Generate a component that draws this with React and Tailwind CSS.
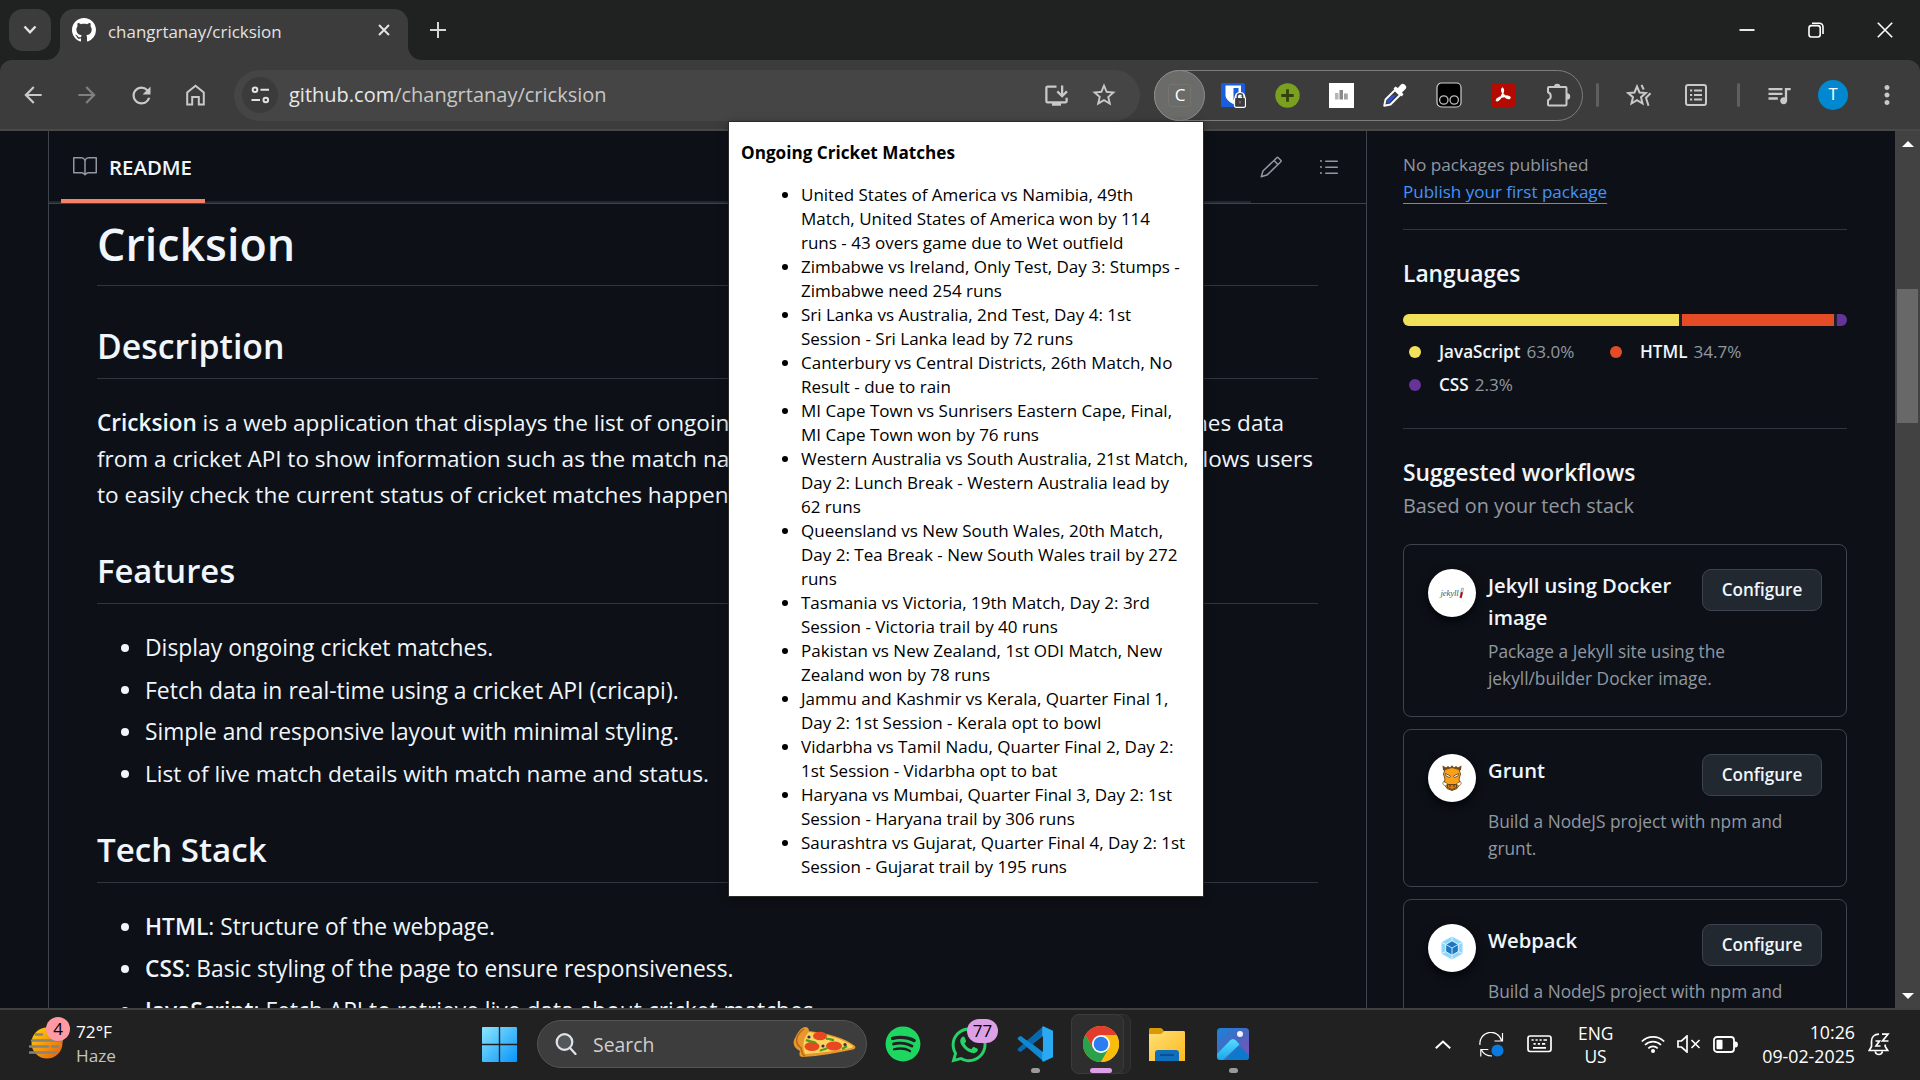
import React from "react";
import {
  MdArrowBack,
  MdArrowForward,
  MdRefresh,
  MdStarBorder,
  MdOutlineInstallDesktop,
  MdQueueMusic,
  MdMoreVert,
} from "react-icons/md";
import { GoBook, GoPencil, GoListUnordered } from "react-icons/go";
import { FaSpotify, FaWhatsapp } from "react-icons/fa";

/* ---------- tab strip and toolbar ---------- */

function GithubMark() {
  return (
    <svg viewBox="0 0 16 16" className="size-6 shrink-0" fill="#fff">
      <path d="M8 0C3.58 0 0 3.58 0 8c0 3.54 2.29 6.53 5.47 7.59.4.07.55-.17.55-.38 0-.19-.01-.82-.01-1.49-2.01.37-2.53-.49-2.69-.94-.09-.23-.48-.94-.82-1.13-.28-.15-.68-.52-.01-.53.63-.01 1.08.58 1.23.82.72 1.21 1.87.87 2.33.66.07-.52.28-.87.51-1.07-1.78-.2-3.64-.89-3.64-3.95 0-.87.31-1.59.82-2.15-.08-.2-.36-1.02.08-2.12 0 0 .67-.21 2.2.82.64-.18 1.32-.27 2-.27s1.36.09 2 .27c1.53-1.04 2.2-.82 2.2-.82.44 1.1.16 1.92.08 2.12.51.56.82 1.27.82 2.15 0 3.07-1.87 3.75-3.65 3.95.29.25.54.73.54 1.48 0 1.07-.01 1.93-.01 2.2 0 .21.15.46.55.38A8.01 8.01 0 0 0 16 8c0-4.42-3.58-8-8-8Z" />
    </svg>
  );
}

function TabStrip() {
  return (
    <div className="flex h-[60px] bg-[#202221]">
      <button className="mt-[9px] ml-[9px] flex h-[42px] w-[42px] items-center justify-center rounded-[14px] bg-[#3c3c3c]">
        <svg viewBox="0 0 14 10" className="h-[10px] w-[14px]" fill="none" stroke="#e3e3e3" strokeWidth="2.4">
          <path d="M1.5 1.5 7 7.3l5.500-5.800" />
        </svg>
      </button>
      <div className="mt-[9px] flex h-[51px] items-stretch">
        <svg viewBox="0 0 14 14" className="-ml-[5px] size-[14px] self-end" fill="#3c3c3c">
          <path d="M14 0v14H0A14 14 0 0 0 14 0Z" />
        </svg>
        <div className="flex w-[348px] items-center rounded-t-[14px] bg-[#3c3c3c] pb-[9px] pl-3">
          <GithubMark />
          <span className="ml-3 pt-[3px] text-[16.95px] leading-6 text-[#e3e3e3]">changrtanay/cricksion</span>
          <svg viewBox="0 0 12 12" className="ml-auto mr-[18px] size-3" stroke="#e3e3e3" strokeWidth="2">
            <path d="m1 1 10 10M11 1 1 11" />
          </svg>
        </div>
        <svg viewBox="0 0 14 14" className="size-[14px] self-end" fill="#3c3c3c">
          <path d="M0 0v14h14A14 14 0 0 1 0 0Z" />
        </svg>
      </div>
      <svg viewBox="0 0 16 16" className="mt-[22px] ml-2 size-4" stroke="#d6d6d6" strokeWidth="2">
        <path d="M8 0v16M0 8h16" />
      </svg>
      <div className="ml-auto flex h-[60px] items-center text-white">
        <svg viewBox="0 0 16 16" className="mr-[53px] size-4" stroke="#fff" strokeWidth="1.800">
          <path d="M.5 8h15" />
        </svg>
        <svg viewBox="0 0 16 16" className="mr-[53px] size-4" fill="none" stroke="#fff" strokeWidth="1.600">
          <rect x="1" y="3.600" width="11.200" height="11.400" rx="2.400" />
          <path d="M4 1.200h7.500a3.500 3.500 0 0 1 3.500 3.500V12" />
        </svg>
        <svg viewBox="0 0 16 16" className="mr-[27px] size-4" stroke="#fff" strokeWidth="1.600">
          <path d="m.8.8 14.400 14.400M15.200.8.8 15.200" />
        </svg>
      </div>
    </div>
  );
}

function Bitwarden() {
  return (
    <svg viewBox="0 0 25 25" className="size-[25px]">
      <rect width="24" height="24" rx="1.500" fill="#175ddc" />
      <path d="M4.500 2.500h15.500V12c0 5-4 8-6.500 9.500C8.500 19.500 4.500 16 4.500 12Z" fill="#fff" />
      <path d="M12.500 5h5v7c0 2-2.500 3.500-5 5Z" fill="#175ddc" />
      <path d="M15.500 15v-1.500a3.600 3.600 0 0 1 7 0V15" fill="none" stroke="#fff" strokeWidth="3.600" />
      <rect x="13.500" y="14.500" width="11" height="9.800" rx="1.500" fill="#3c3c3c" stroke="#fff" strokeWidth="1.200" />
      <path d="M16.300 15v-1.500a2.700 2.700 0 0 1 5.400 0V15" fill="none" stroke="#4a4a4a" strokeWidth="1.500" />
      <path d="M19 18v2.500" stroke="#777" strokeWidth="1.400" />
    </svg>
  );
}

function Dropper() {
  return (
    <svg viewBox="0 0 24 24" className="size-6">
      <path d="M12 7 2.500 16.500 1.200 22.800 7.500 21.500 17 12Z" fill="#3c3c3c" stroke="#fff" strokeWidth="1.900" strokeLinejoin="round" />
      <path d="m8.500 12.500 4.500-.5-6.200 7.500-3.300.7.700-3.300Z" fill="#2f4fd0" />
      <path d="m10.500 5.500 2-2 2.300 1.500L18 1.500c1-1 2.500-1 3.500 0l1 1c1 1 1 2.500 0 3.500L19 9.500l1.500 2-2 2Z" fill="#fff" />
    </svg>
  );
}

function Tampermonkey() {
  return (
    <svg viewBox="0 0 26 26" className="size-[26px]">
      <rect x="1" y="1" width="24" height="24" rx="4.500" fill="#000" stroke="#cfcfcf" strokeWidth="1.200" />
      <circle cx="7.800" cy="18" r="4.200" fill="none" stroke="#bdbdbd" strokeWidth="1.300" />
      <circle cx="18.200" cy="18" r="4.200" fill="none" stroke="#bdbdbd" strokeWidth="1.300" />
    </svg>
  );
}

function Acrobat() {
  return (
    <svg viewBox="0 0 24 24" className="size-6">
      <rect width="24" height="24" rx="3" fill="#b30b00" />
      <path
        d="M11.500 5.300c-1.300 1 0 4.500 1.200 6.600 1.400 2.400 4.200 4 5.800 3.300 1.500-1-1.300-2.300-5-1.900-3.600.4-8 2.300-8 3.900.4 1.400 3-.3 4.800-3.600 1.500-2.800 2.600-7 1.200-8.300Z"
        fill="none"
        stroke="#fff"
        strokeWidth="1.700"
      />
    </svg>
  );
}

function Puzzle() {
  return (
    <svg viewBox="0 0 25 25" className="ml-[2px] size-[25px]">
      <path
        d="M3 4h16.500a1 1 0 0 1 1 1v16.500a1 1 0 0 1-1 1H3a1 1 0 0 1-1-1v-4.300a4.200 4.200 0 0 0 0-7.900V5a1 1 0 0 1 1-1Z"
        fill="none"
        stroke="#c9c9c9"
        strokeWidth="2"
        strokeLinejoin="round"
      />
      <path d="M8 4a3.200 3.200 0 0 1 6.400 0ZM21 10.300a3.200 3.200 0 0 1 0 6.400Z" fill="#c9c9c9" />
    </svg>
  );
}

function Extension({ children }) {
  return <div className="flex w-[54px] shrink-0 justify-center">{children}</div>;
}

function Toolbar() {
  return (
    <div className="bg-[#202221]">
      <div className="flex h-[71px] items-center rounded-t-xl border-b-2 border-[#484848] bg-[#3c3c3c] pt-px pl-[6px] text-[#c9c9c9]">
        <div className="flex w-[54px] justify-center">
          <MdArrowBack className="size-[26px]" />
        </div>
        <div className="flex w-[54px] justify-center text-[#808080]">
          <MdArrowForward className="size-[26px]" />
        </div>
        <div className="flex w-[54px] justify-center">
          <MdRefresh className="size-[27px]" />
        </div>
        <div className="flex w-[54px] justify-center">
          <svg viewBox="0 0 19 22" className="h-[22px] w-[19px]" fill="none" stroke="currentColor" strokeWidth="2">
            <path d="M1.200 20.500V8.500L9.500 1.700l8.300 6.800v12h-5v-7.500H6.200v7.500Z" />
          </svg>
        </div>

        <div className="ml-3 flex h-[51px] w-[906px] items-center rounded-full bg-[#454545] px-2">
          <div className="flex size-9 items-center justify-center rounded-full bg-[#3b3b3b]">
            <svg viewBox="0 0 19 18" className="h-[18px] w-[19px]" fill="none" stroke="#e3e3e3" strokeWidth="2">
              <circle cx="4" cy="3.700" r="2.300" />
              <path d="M9.500 3.700H18M.5 14H9" />
              <circle cx="14.800" cy="14" r="2.300" />
            </svg>
          </div>
          <span className="ml-[11px] text-[20px] leading-7 text-[#c7c7c7]">
            <span className="text-[#e8e8e8]">github.com</span>/changrtanay/cricksion
          </span>
          <MdOutlineInstallDesktop className="ml-auto size-[27px]" />
          <MdStarBorder className="mr-[14px] ml-[20px] size-[28px]" />
        </div>

        <div className="ml-[14px] flex h-[51px] w-[429px] items-center rounded-full border border-[#7d7d7d]">
          <div className="mr-px -ml-px flex size-[51px] shrink-0 items-center justify-center rounded-full border border-[#8c8c8a] bg-[#6b6b69]">
            <span className="flex size-[23px] items-center justify-center rounded-[3px] border border-[#747472] pl-px text-[17px] text-white">
              C
            </span>
          </div>
          <Extension>
            <Bitwarden />
          </Extension>
          <Extension>
            <svg viewBox="0 0 25 25" className="size-[25px]">
              <circle cx="12.500" cy="12.500" r="12.200" fill="#7aa01f" />
              <path d="M12.500 6.300v12.400M6.300 12.500h12.400" stroke="#33400f" strokeWidth="2.800" />
            </svg>
          </Extension>
          <Extension>
            <svg viewBox="0 0 25 25" className="size-[25px]">
              <rect width="25" height="25" fill="#fff" />
              <path d="M6 10h3.500v6.500H6Z" fill="#b5b5b5" />
              <path d="M10.500 7H14v9.500h-3.500Z" fill="#8a8a8a" />
              <path d="M15 10.500h3.800v6H15Z" fill="#a3a3a3" />
            </svg>
          </Extension>
          <Extension>
            <Dropper />
          </Extension>
          <Extension>
            <Tampermonkey />
          </Extension>
          <Extension>
            <Acrobat />
          </Extension>
          <Extension>
            <Puzzle />
          </Extension>
        </div>

        <div className="ml-[13px] h-6 w-[3px] shrink-0 rounded bg-[#5f5f5f]" />
        <div className="ml-[11px] flex w-[57px] justify-center">
          <svg viewBox="0 0 26 23" className="h-[23px] w-[26px]" fill="none" stroke="currentColor" strokeWidth="2">
            <path d="m11 2.500 2.500 6 6.300.5-4.800 4.200 1.500 6.300-5.500-3.300-5.500 3.300L7 13.200 2.200 9l6.300-.5Z" />
            <path d="m15.500.8 2.200 4.700M24.500 9.200l-4.500 4.500 2.500 8" />
          </svg>
        </div>
        <div className="flex w-[57px] justify-center">
          <svg viewBox="0 0 22 22" className="size-[22px]" fill="none" stroke="currentColor" strokeWidth="2">
            <rect x="1" y="1" width="20" height="20" rx="2" />
            <path d="M5 6.500h2.200M5 11h2.200M5 15.500h2.200M9 6.500h8M9 11h8M9 15.500h8" />
          </svg>
        </div>
        <div className="ml-[13px] h-6 w-[3px] shrink-0 rounded bg-[#5f5f5f]" />
        <div className="ml-[12px] flex w-[54px] justify-center">
          <MdQueueMusic className="size-[28px]" />
        </div>
        <div className="flex w-[54px] justify-center">
          <div className="flex size-[30px] items-center justify-center rounded-full bg-[#0288d1] font-['Roboto'] text-[16px] text-white">
            T
          </div>
        </div>
        <div className="flex w-[54px] justify-center">
          <MdMoreVert className="size-[30px]" />
        </div>
      </div>
    </div>
  );
}

/* ---------- readme ---------- */

function Heading({ children, className }) {
  return (
    <h2 className={"border-b border-[#30363e] pb-[10px] font-semibold leading-[44px] " + className}>{children}</h2>
  );
}

function Item({ children, className = "text-[22.75px]" }) {
  return (
    <li className={"flex items-center leading-9 " + className}>
      <span className="ml-6 mr-4 size-2 rounded-full bg-[#f0f6fc]" />
      <span>{children}</span>
    </li>
  );
}

function Readme() {
  return (
    <main className="ml-12 flex w-[1319px] shrink-0 flex-col border-x border-[#3d444d] text-[#f0f6fc]">
      <div className="flex h-[73px] shrink-0 border-b border-[#3d444d]">
        <div className="flex w-[1202px] border-b-2 border-[#212830]">
          <div className="-mb-0.5 ml-3 flex w-36 items-center border-b-4 border-[#f78166] pt-[3px] pl-3">
            <GoBook className="-mt-px size-6 text-[#9198a1]" />
            <span className="ml-3 pt-px text-[20.4px] font-semibold">README</span>
          </div>
          <GoPencil className="mt-6 ml-auto -mr-[32px] size-6 text-[#9198a1]" />
        </div>
        <GoListUnordered className="mt-6 ml-[66px] size-6 text-[#9198a1]" />
      </div>
      <article className="flex flex-col px-12 text-[22.55px]">
        <h1 className="border-b border-[#30363e] pt-[10px] pb-[11px] text-[44.8px] leading-[60px] font-semibold">
          Cricksion
        </h1>
        <Heading className="mt-[38px] text-[33.8px]">Description</Heading>
        <div className="mt-[26px] leading-9 whitespace-nowrap">
          <p className="flex justify-between pr-[34px]">
            <span>
              <b className="font-semibold">Cricksion</b> is a web application that displays the list of ongoing
            </span>
            <span>fetches data</span>
          </p>
          <p className="flex justify-between pr-[5px]">
            <span>from a cricket API to show information such as the match name</span>
            <span>allows users</span>
          </p>
          <p className="text-[22.65px]">to easily check the current status of cricket matches happening</p>
        </div>
        <Heading className="mt-[36px] text-[32.8px]">Features</Heading>
        <ul className="mt-[26px] flex flex-col gap-[6px]">
          <Item className="text-[22.9px]">Display ongoing cricket matches.</Item>
          <Item className="text-[22.95px]">Fetch data in real-time using a cricket API (cricapi).</Item>
          <Item>Simple and responsive layout with minimal styling.</Item>
          <Item className="text-[22.65px]">List of live match details with match name and status.</Item>
        </ul>
        <Heading className="mt-[36px] text-[33.1px]">Tech Stack</Heading>
        <ul className="mt-[26px] flex flex-col gap-[6px]">
          <Item>
            <b className="font-semibold">HTML</b>: Structure of the webpage.
          </Item>
          <Item>
            <b className="font-semibold">CSS</b>: Basic styling of the page to ensure responsiveness.
          </Item>
          <Item>
            <b className="font-semibold">JavaScript</b>: Fetch API to retrieve live data about cricket matches.
          </Item>
        </ul>
      </article>
    </main>
  );
}

/* ---------- repository sidebar ---------- */

function Language({ dot, name, share, className }) {
  return (
    <div className={"flex items-center " + className}>
      <span className={"mr-[18px] ml-[6px] size-3 rounded-full " + dot} />
      <span className="text-[17.1px] font-semibold text-[#f0f6fc]">{name}</span>
      <span className="ml-[6px] text-[17.1px] text-[#9198a1]">{share}</span>
    </div>
  );
}

function Workflow({ icon, title, lines }) {
  return (
    <div className="rounded-lg border border-[#3d444d] p-6">
      <div className="mb-[5px] flex min-h-[49px] items-start">
        <div className="flex size-12 shrink-0 items-center justify-center rounded-full bg-white shadow-[0_4px_10px_#010409]">
          {icon}
        </div>
        <h3 className="ml-3 text-[20.2px] leading-8 font-semibold text-[#f0f6fc]">
          {title.map((t) => (
            <span key={t} className="block">
              {t}
            </span>
          ))}
        </h3>
        <button className="ml-auto flex h-[42px] w-[120px] items-center justify-center rounded-[9px] border border-[#3d444d] bg-[#212830] text-[17.1px] font-semibold text-[#f0f6fc]">
          Configure
        </button>
      </div>
      <p className="pl-[60px] text-[17.3px] leading-[27px] whitespace-nowrap text-[#9198a1]">
        {lines.map((t) => (
          <span key={t} className="block">
            {t}
          </span>
        ))}
      </p>
    </div>
  );
}

function JekyllLogo() {
  return (
    <div className="flex items-center">
      <span className="font-['Liberation_Serif'] text-[9px] leading-3 tracking-tight text-[#555] italic">jekyll</span>
      <svg viewBox="0 0 5 12" className="-mt-px h-3 w-[5px]">
        <path d="M2.800 1 .8 10.500 2.500 11 4.500 1.500Z" fill="#fff" stroke="#555" strokeWidth=".5" />
        <path d="M2 5 .8 10.500 2.500 11 3.800 5.300Z" fill="#c00" />
      </svg>
    </div>
  );
}

function GruntLogo() {
  return (
    <svg viewBox="0 0 20 26" className="h-[26px] w-5">
      <path d="M.5.5 4 2.500 6 1l2 1.500L10 .3l2 2.200L14 1l2 1.500L19.500.5 19 5l-2.500 1.500h-13L1 5Z" fill="#6b4a1e" />
      <path d="M3 4.500 10 2.500l7 2 1.500 4.500-1.500 5 1 4.500-3 5L10 25.500l-5-2-3-5 1-4.500L1.500 9Z" fill="#f9a01b" stroke="#7a4c10" />
      <path d="m3.500 8.500 5 2.500-1 1.500-3.500-1.500ZM16.500 8.500l-5 2.500 1 1.500 3.500-1.500Z" fill="#fff" stroke="#463010" strokeWidth=".7" />
      <path d="M1.500 16.500c-1.500 2 0 4 2.500 4.500l1.500-2.500ZM18.500 16.500c1.500 2 0 4-2.500 4.500l-1.500-2.500Z" fill="#fff" stroke="#7a4c10" strokeWidth=".7" />
      <path d="M5.500 19.500h9v3l-4.500 2-4.500-2Z" fill="#e07d14" stroke="#463010" strokeWidth=".8" />
      <path d="M8 20.300v1.500M12 20.300v1.500" stroke="#463010" strokeWidth="1.300" />
    </svg>
  );
}

function WebpackLogo() {
  return (
    <svg viewBox="0 0 22 24" className="h-6 w-[22px]">
      <path d="M11 .5 21.500 6.300v11.400L11 23.500.5 17.700V6.300Z" fill="#8ed6fb" />
      <path d="M11 4.800 17.300 8.400v7.200L11 19.200 4.700 15.600V8.400Z" fill="#1c78c0" stroke="#fff" strokeWidth=".8" />
      <path d="M11 .5v4.300M11 19.200v4.300M.5 6.300l4.200 2.100M21.500 6.300l-4.200 2.100M.5 17.700l4.200-2.100M21.500 17.700l-4.200-2.100" stroke="#fff" strokeWidth=".8" />
      <path d="M11 12v7M11 12 5 8.600M11 12l6-3.400" stroke="#d7f0fd" strokeWidth=".9" />
    </svg>
  );
}

function Sidebar() {
  return (
    <aside className="ml-9 flex w-[444px] shrink-0 flex-col pt-5 text-[#9198a1]">
      <p className="text-[17.2px] leading-[27px]">No packages published</p>
      <p className="text-[17.05px] leading-[27px] text-[#4493f8]">
        <span className="underline decoration-1 underline-offset-[5px] [text-decoration-skip-ink:none]">
          Publish your first package
        </span>
      </p>
      <hr className="mt-6 border-[#30363e]" />
      <h2 className="mt-[29px] text-[22.8px] leading-[30px] font-semibold text-[#f0f6fc]">Languages</h2>
      <div className="mt-[25px] flex h-3 shrink-0 gap-[3px] overflow-hidden rounded-full bg-[#1b2129]">
        <span className="w-[276px] bg-[#f1e05a]" />
        <span className="w-[152px] bg-[#e34c26]" />
        <span className="grow bg-[#663399]" />
      </div>
      <div className="mt-[9px] flex shrink-0 flex-wrap leading-[33px]">
        <Language dot="bg-[#f1e05a]" name="JavaScript" share="63.0%" className="w-[201px]" />
        <Language dot="bg-[#e34c26]" name="HTML" share="34.7%" className="w-[200px]" />
        <Language dot="bg-[#663399]" name="CSS" share="2.3%" className="w-[201px]" />
      </div>
      <hr className="mt-[27px] border-[#30363e]" />
      <h2 className="mt-[29px] text-[22.8px] leading-[30px] font-semibold text-[#f0f6fc]">Suggested workflows</h2>
      <p className="mt-[3px] text-[19.85px] leading-[30px]">Based on your tech stack</p>
      <div className="mt-[23px] flex flex-col gap-3">
        <Workflow
          icon={<JekyllLogo />}
          title={["Jekyll using Docker", "image"]}
          lines={["Package a Jekyll site using the", "jekyll/builder Docker image."]}
        />
        <Workflow icon={<GruntLogo />} title={["Grunt"]} lines={["Build a NodeJS project with npm and", "grunt."]} />
        <Workflow icon={<WebpackLogo />} title={["Webpack"]} lines={["Build a NodeJS project with npm and"]} />
      </div>
    </aside>
  );
}

function Scrollbar() {
  return (
    <div className="ml-auto flex w-[25px] flex-col items-center bg-[#424242]">
      <svg viewBox="0 0 12 6" className="mt-[10px] h-[6px] w-3 shrink-0" fill="#fff">
        <path d="M6 0l6 6H0Z" />
      </svg>
      <div className="mt-[142px] mr-px h-[134px] w-[21px] shrink-0 bg-[#686868]" />
      <svg viewBox="0 0 12 6" className="mt-auto mb-[9px] h-[6px] w-3 shrink-0" fill="#fff">
        <path d="M6 6 0 0h12Z" />
      </svg>
    </div>
  );
}

/* ---------- extension popup ---------- */

const MATCHES = [
  ["United States of America vs Namibia, 49th", "Match, United States of America won by 114", "runs - 43 overs game due to Wet outfield"],
  ["Zimbabwe vs Ireland, Only Test, Day 3: Stumps -", "Zimbabwe need 254 runs"],
  ["Sri Lanka vs Australia, 2nd Test, Day 4: 1st", "Session - Sri Lanka lead by 72 runs"],
  ["Canterbury vs Central Districts, 26th Match, No", "Result - due to rain"],
  ["MI Cape Town vs Sunrisers Eastern Cape, Final,", "MI Cape Town won by 76 runs"],
  ["Western Australia vs South Australia, 21st Match,", "Day 2: Lunch Break - Western Australia lead by", "62 runs"],
  ["Queensland vs New South Wales, 20th Match,", "Day 2: Tea Break - New South Wales trail by 272", "runs"],
  ["Tasmania vs Victoria, 19th Match, Day 2: 3rd", "Session - Victoria trail by 40 runs"],
  ["Pakistan vs New Zealand, 1st ODI Match, New", "Zealand won by 78 runs"],
  ["Jammu and Kashmir vs Kerala, Quarter Final 1,", "Day 2: 1st Session - Kerala opt to bowl"],
  ["Vidarbha vs Tamil Nadu, Quarter Final 2, Day 2:", "1st Session - Vidarbha opt to bat"],
  ["Haryana vs Mumbai, Quarter Final 3, Day 2: 1st", "Session - Haryana trail by 306 runs"],
  ["Saurashtra vs Gujarat, Quarter Final 4, Day 2: 1st", "Session - Gujarat trail by 195 runs"],
];

function Popup() {
  return (
    <section className="absolute top-[122px] left-[729px] h-[774px] w-[474px] bg-white pt-[18px] pl-3 text-black shadow-[0_0_0_1px_#2b2b2b,0_2px_8px_rgba(0,0,0,0.5)]">
      <h4 className="text-[17.15px] leading-[25px] font-bold">Ongoing Cricket Matches</h4>
      <ul className="mt-[18px] pl-[41px] text-[17px] leading-6 whitespace-nowrap">
        {MATCHES.map((lines) => (
          <li key={lines[0]} className="flex items-start">
            <span className="mt-[9px] mr-[13px] size-[6px] shrink-0 rounded-full bg-black" />
            <span>
              {lines.map((t) => (
                <span key={t} className="block">
                  {t}
                </span>
              ))}
            </span>
          </li>
        ))}
      </ul>
    </section>
  );
}

/* ---------- taskbar ---------- */

function Pizza() {
  return (
    <svg viewBox="0 0 64 32" className="h-8 w-16">
      <path d="M13 1c3 0 4 2 4 4 18 2 36 7 46 15 1 2 0 3-2 3.500C45 27 27 30 11 31c-4 0-4-3-3-6C2 22 0 17 3 12 5 8 8 2 13 1Z" fill="#e8962e" />
      <path d="M17 6c17 2 34 7 44 14 0 1-1 1.500-2 2-15 3-31 5-46 6C10 20 11 12 17 6Z" fill="#fbd45c" />
      <path d="M12 3C5 8 1 16 9 22c1 4 1 7 4 8" fill="none" stroke="#b9651b" strokeWidth="1.500" />
      <ellipse cx="28" cy="10" rx="7" ry="4.300" fill="#e8481f" />
      <ellipse cx="20" cy="20.500" rx="7.500" ry="4.500" fill="#e8481f" />
      <ellipse cx="42" cy="20" rx="8" ry="4.500" fill="#e8481f" />
      <path d="M14 14c4 2 8 1 10 3M34 13c3-1 5 1 8 1M28 25c2-2 5-1 7-3M50 23l5-3" fill="none" stroke="#4f9a22" strokeWidth="2.200" />
      <circle cx="17" cy="11" r="1.600" fill="#3f2a5c" />
      <circle cx="31" cy="20" r="1.600" fill="#3f2a5c" />
      <circle cx="53" cy="18.500" r="1.600" fill="#3f2a5c" />
    </svg>
  );
}

function VsCode() {
  return (
    <svg viewBox="0 0 100 100" className="size-9">
      <path d="M72 2 28 42 10 28 2 32v4l58 50 14 12Z" fill="#0f7cc4" />
      <path d="M72 25 10 72l-8-4v-5L72 3Z" fill="#0868ab" />
      <path d="M2 36 10 28l64 46v24Z" fill="#1089d3" />
      <path d="m73 1 27 12v74L73 99c-2 0-3-1-3-3V4c0-2 1-3 3-3Z" fill="#2aa9f2" />
      <path d="M72 28v44L43 50Z" fill="#212121" />
    </svg>
  );
}

function ChromeLogo() {
  return (
    <svg viewBox="0 0 48 48" className="size-9">
      <circle cx="24" cy="24" r="24" fill="#f9bd0d" />
      <path d="M24 12h20.800A24 24 0 0 0 3.200 12L13.600 30 24 24Z" fill="#e33b2e" />
      <path d="M3.200 12A24 24 0 0 0 24 48l10.400-18L24 24 13.600 30Z" fill="#2ba14b" />
      <path d="M34.400 30 24 48A24 24 0 0 0 44.800 12H24v12Z" fill="#f9bd0d" />
      <circle cx="24" cy="24" r="12" fill="#fff" />
      <circle cx="24" cy="24" r="9.800" fill="#2b7df0" />
    </svg>
  );
}

function Folder() {
  return (
    <svg viewBox="0 0 36 33" className="h-[33px] w-9">
      <defs>
        <linearGradient id="folder" x1="0" y1="0" x2="1" y2="1">
          <stop offset="0" stopColor="#ffe07a" />
          <stop offset="1" stopColor="#fcb91b" />
        </linearGradient>
      </defs>
      <path d="M0 1.500C0 .7.700 0 1.500 0h10c2 0 3 3.500 5 3.500V10H0Z" fill="#d99a08" />
      <path d="M0 6h12l3.500-3H34.500c1 0 1.500.7 1.500 1.500V33H0Z" fill="url(#folder)" />
      <path d="M6 33V25c0-2 1.300-3 3-3h18c2 0 3 1 3 3v8Z" fill="#0f6fbd" />
      <path d="M11 27h14" stroke="#084a85" strokeWidth="1.600" />
    </svg>
  );
}

function Photos() {
  return (
    <svg viewBox="0 0 32 32" className="size-8">
      <defs>
        <linearGradient id="sky" x1="0" y1="0" x2="1" y2="1">
          <stop offset="0" stopColor="#1a83d8" />
          <stop offset=".5" stopColor="#4767c3" />
          <stop offset="1" stopColor="#8a4fb0" />
        </linearGradient>
        <linearGradient id="hill" x1="0" y1="0" x2="0" y2="1">
          <stop offset="0" stopColor="#55dcff" />
          <stop offset="1" stopColor="#1ba6ec" />
        </linearGradient>
        <clipPath id="tile">
          <rect width="32" height="32" rx="3.500" />
        </clipPath>
      </defs>
      <g clipPath="url(#tile)">
        <rect width="32" height="32" fill="url(#sky)" />
        <path d="M8 32 21 19c1-1 2-1 3 0l9 9v5Z" fill="#0c79cf" />
        <path d="M0 26 13 12.500c2-2 4-2 6 0l3.500 4L6 32H0Z" fill="url(#hill)" />
        <circle cx="23" cy="6" r="3" fill="#f1f4fb" />
      </g>
    </svg>
  );
}

function Taskbar() {
  return (
    <footer className="flex h-[72px] border-t-2 border-[#404040] bg-[#212121] text-white">
      <div className="flex w-[482px] pt-[7px] pl-[29px]">
        <div className="relative h-[50px] w-[47px]">
          <svg viewBox="0 0 34 32" className="mt-[10px] h-8 w-[34px]">
            <defs>
              <linearGradient id="sun" x1="0" y1="0" x2="1" y2="1">
                <stop offset="0" stopColor="#ffd60a" />
                <stop offset="1" stopColor="#e8590c" />
              </linearGradient>
            </defs>
            <circle cx="18" cy="16" r="15.500" fill="url(#sun)" />
            <path d="M7 7.500h6M3 13.500h30M1 19.500h18M23 19.500h6M1 25.500h26" stroke="#8b8378" strokeWidth="2.600" strokeLinecap="round" />
          </svg>
          <span className="absolute top-0 left-[17px] flex size-[24px] items-center justify-center rounded-full bg-[#ff99a4] text-[17px] text-black">
            4
          </span>
        </div>
        <div className="pt-[3px] text-[17.2px] leading-6">
          <p>72°F</p>
          <p className="text-[#c4c4c4]">Haze</p>
        </div>
      </div>

      <svg viewBox="0 0 35 35" className="mt-[17px] size-[35px] shrink-0">
        <defs>
          <linearGradient id="win" x1="0" y1="0" x2="1" y2="1">
            <stop offset="0" stopColor="#8be6ff" />
            <stop offset="1" stopColor="#0794f8" />
          </linearGradient>
        </defs>
        <path d="M1 0h15.800v16.800H0V1a1 1 0 0 1 1-1ZM18.200 0H34a1 1 0 0 1 1 1v15.800H18.200ZM0 18.200h16.800V35H1a1 1 0 0 1-1-1ZM18.200 18.200H35V34a1 1 0 0 1-1 1H18.200Z" fill="url(#win)" />
      </svg>

      <div className="mt-[10px] ml-5 flex h-12 w-[330px] shrink-0 items-center rounded-full border border-[#545454] bg-[#3d3d3d] pl-[17px]">
        <svg viewBox="0 0 22 22" className="size-[22px]" fill="none" stroke="#e0e4ea" strokeWidth="2.200" strokeLinecap="round">
          <circle cx="9.500" cy="9" r="7.800" fill="#53565a" />
          <path d="m15 15 5.500 6" />
        </svg>
        <span className="ml-4 pt-px text-[19.4px] text-[#cfcfcf]">Search</span>
        <div className="mr-[10px] ml-auto -mt-1">
          <Pizza />
        </div>
      </div>

      <FaSpotify className="mt-4 ml-[18px] size-9 shrink-0 text-[#1ed760]" />
      <div className="relative mt-4 ml-[30px] h-9 w-9 shrink-0">
        <FaWhatsapp className="-ml-[2px] -mt-[1px] size-[40px] text-[#25d366]" />
        <span className="absolute -top-[7px] left-4 flex h-6 w-[31px] items-center justify-center rounded-full bg-[#dda0e6] text-[17px] text-black">
          77
        </span>
      </div>
      <div className="ml-[30px] flex w-9 shrink-0 flex-col items-center pt-4">
        <VsCode />
        <span className="mt-[6px] h-[5px] w-[9px] rounded-full bg-[#9a9a9a]" />
      </div>
      <div className="mt-[4px] ml-[18px] h-[60px] w-[60px] shrink-0 rounded-lg border border-[#343434] bg-[#282828]">
        <div className="-mt-px -ml-px flex h-[60px] w-[53px] flex-col items-center rounded-lg border border-[#3b3b3b] bg-[#2e2e2e] pt-[11px] pl-[6px]">
          <ChromeLogo />
          <span className="mt-[6px] h-[5px] w-[22px] rounded-full bg-[#dda0e6]" />
        </div>
      </div>
      <div className="mt-[18px] ml-[18px] shrink-0">
        <Folder />
      </div>
      <div className="ml-8 flex w-8 shrink-0 flex-col items-center pt-[18px]">
        <Photos />
        <span className="mt-2 h-[5px] w-[9px] rounded-full bg-[#9a9a9a]" />
      </div>

      <div className="ml-auto flex h-[68px] items-center">
        <svg viewBox="0 0 16 9" className="mr-7 h-[9px] w-4" fill="none" stroke="#fff" strokeWidth="2">
          <path d="m.8 8.200 7.200-6.700 7.200 6.700" />
        </svg>
        <svg viewBox="0 0 25 25" className="mr-[23px] size-[25px]" fill="none" stroke="#fff" strokeWidth="1.200">
          <path d="M1 13A11 11 0 0 1 22.500 8.500M23.500 1v8h-8M1.800 24.500v-7h7.500M2.500 18c2 4 6 6 10.500 6" />
          <circle cx="18.500" cy="18.500" r="6" fill="#0a7bdc" stroke="none" />
        </svg>
        <svg viewBox="0 0 25 18" className="mr-[26px] h-[18px] w-[25px]" fill="none" stroke="#fff" strokeWidth="1.700">
          <rect x="1" y="1" width="23" height="15.500" rx="2.200" />
          <path d="M4.500 5h2.200M8.500 5h2.200M12.500 5h2.200M16.500 5h3.500M6.500 8.800h2.200M10.800 8.800H13M15 8.800h3.200M6 12.800h13" />
        </svg>
        <div className="mr-[28px] w-[35px] pt-px text-center text-[17.4px] leading-[23px]">
          <p>ENG</p>
          <p>US</p>
        </div>
        <svg viewBox="0 0 24 18" className="mr-3 h-[18px] w-6" fill="none" stroke="#fff" strokeWidth="1.700">
          <path d="M.8 6.500a16 16 0 0 1 22.400 0M4 10a11.300 11.300 0 0 1 16 0M7.300 13.300a6.700 6.700 0 0 1 9.400 0" />
          <circle cx="12" cy="16" r="2" fill="#fff" stroke="none" />
        </svg>
        <svg viewBox="0 0 24 18" className="mr-3 h-[18px] w-6" fill="none" stroke="#fff" strokeWidth="1.700">
          <path d="M1 6h3.500L10 1v16l-5.500-5H1ZM14.500 5l8 8M22.500 5l-8 8" />
        </svg>
        <svg viewBox="0 0 25 17" className="mr-6 h-[17px] w-[25px]" fill="none" stroke="#fff" strokeWidth="1.800">
          <rect x="1" y="1" width="20" height="15" rx="3" />
          <path d="M21 6.500h1.500c1 0 1.500 1 1.500 2s-.5 2-1.500 2H21" fill="#fff" />
          <rect x="3.500" y="3.800" width="6" height="9.500" rx="1" fill="#fff" stroke="none" />
        </svg>
        <div className="flex w-[93px] flex-col items-end text-[17.8px] leading-6 whitespace-nowrap">
          <p>10:26</p>
          <p>09-02-2025</p>
        </div>
        <svg viewBox="0 0 22 23" className="mr-[30px] ml-[13px] h-[23px] w-[22px]" fill="none" stroke="#fff" strokeWidth="1.700">
          <path d="M11 1.200C6 1.200 3.500 4.500 3.500 8.500v5L1.200 17.500h18.500l-2.500-4v-2M7.300 18.500c.5 4 6.500 4 7 0" />
          <path d="M14 1.200h6L14.500 8h6M7.500 8h4L8 13h4.500" />
        </svg>
      </div>
    </footer>
  );
}

export default function App() {
  return (
    <div className="relative flex h-[1080px] w-[1920px] flex-col overflow-hidden bg-[#0d1117] font-['Open_Sans','Noto_Sans',sans-serif]">
      <TabStrip />
      <Toolbar />
      <div className="flex h-[877px] shrink-0 overflow-hidden">
        <Readme />
        <Sidebar />
        <Scrollbar />
      </div>
      <Taskbar />
      <Popup />
    </div>
  );
}
